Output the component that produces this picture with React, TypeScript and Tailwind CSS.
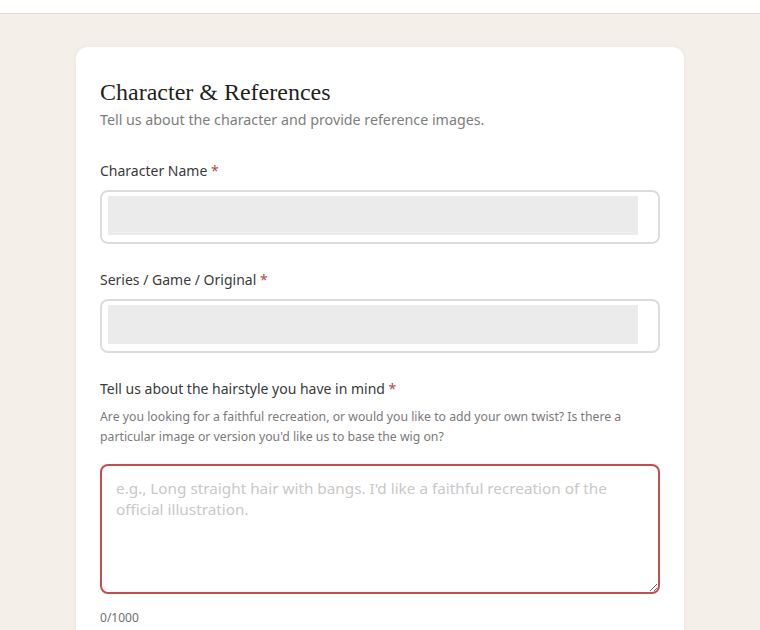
import React from 'react';

const sans = { fontFamily: '"Noto Sans", "Open Sans", sans-serif' };

function Label({ children }: { children: React.ReactNode }) {
  return (
    <label className="block text-[14px] leading-5 text-[#3a3a3a]">
      {children} <span className="text-[#b5484a]">*</span>
    </label>
  );
}

function TextField() {
  return (
    <div className="mt-[9px] h-[54px] w-full rounded-lg border-2 border-[#dcdcdc] bg-white pt-[4px] pr-[20px] pb-[7px] pl-[6px]">
      <div className="h-full w-full bg-[#ebebeb]" />
    </div>
  );
}

export default function App() {
  const [hair, setHair] = React.useState('');

  return (
    <div className="min-h-[630px] bg-[#f4efe9]" style={sans}>
      <div className="h-[14px] border-b border-[#dedad5] bg-white" />
      <div className="px-[76px] pt-[33px]">
        <div className="rounded-xl bg-white px-6 pt-[29px] pb-6 shadow-[0_0_6px_rgba(0,0,0,0.04)]">
          <h2
            className="text-[24px] leading-8 text-[#1f1f1f]"
            style={{ fontFamily: '"Liberation Serif", serif' }}
          >
            Character &amp; References
          </h2>
          <p className="mt-[2px] text-[14.25px] leading-5 text-[#7d7d7d]">
            Tell us about the character and provide reference images.
          </p>

          <div className="mt-[31px]">
            <Label>Character Name</Label>
            <TextField />
          </div>

          <div className="mt-[26px]">
            <Label>Series / Game / Original</Label>
            <TextField />
          </div>

          <div className="mt-[26px]">
            <Label>Tell us about the hairstyle you have in mind</Label>
            <p className="mt-[8px] text-[12.25px] leading-5 text-[#7a7a7a]">
              Are you looking for a faithful recreation, or would you like to add your own twist? Is there a
              particular image or version you'd like us to base the wig on?
            </p>
            <textarea
              value={hair}
              onChange={(e) => setHair(e.target.value)}
              placeholder="e.g., Long straight hair with bangs. I'd like a faithful recreation of the official illustration."
              className="mt-[17px] block h-[130px] w-full rounded-lg border-2 border-[#c0504f] bg-white px-[14px] py-[12px] text-[15.3px] leading-[21px] text-[#333] outline-none placeholder:text-[#c8c8c8]"
            />
            <p className="mt-[14px] text-[12px] leading-5 text-[#6f6f6f]">{hair.length}/1000</p>
          </div>
        </div>
      </div>
    </div>
  );
}
